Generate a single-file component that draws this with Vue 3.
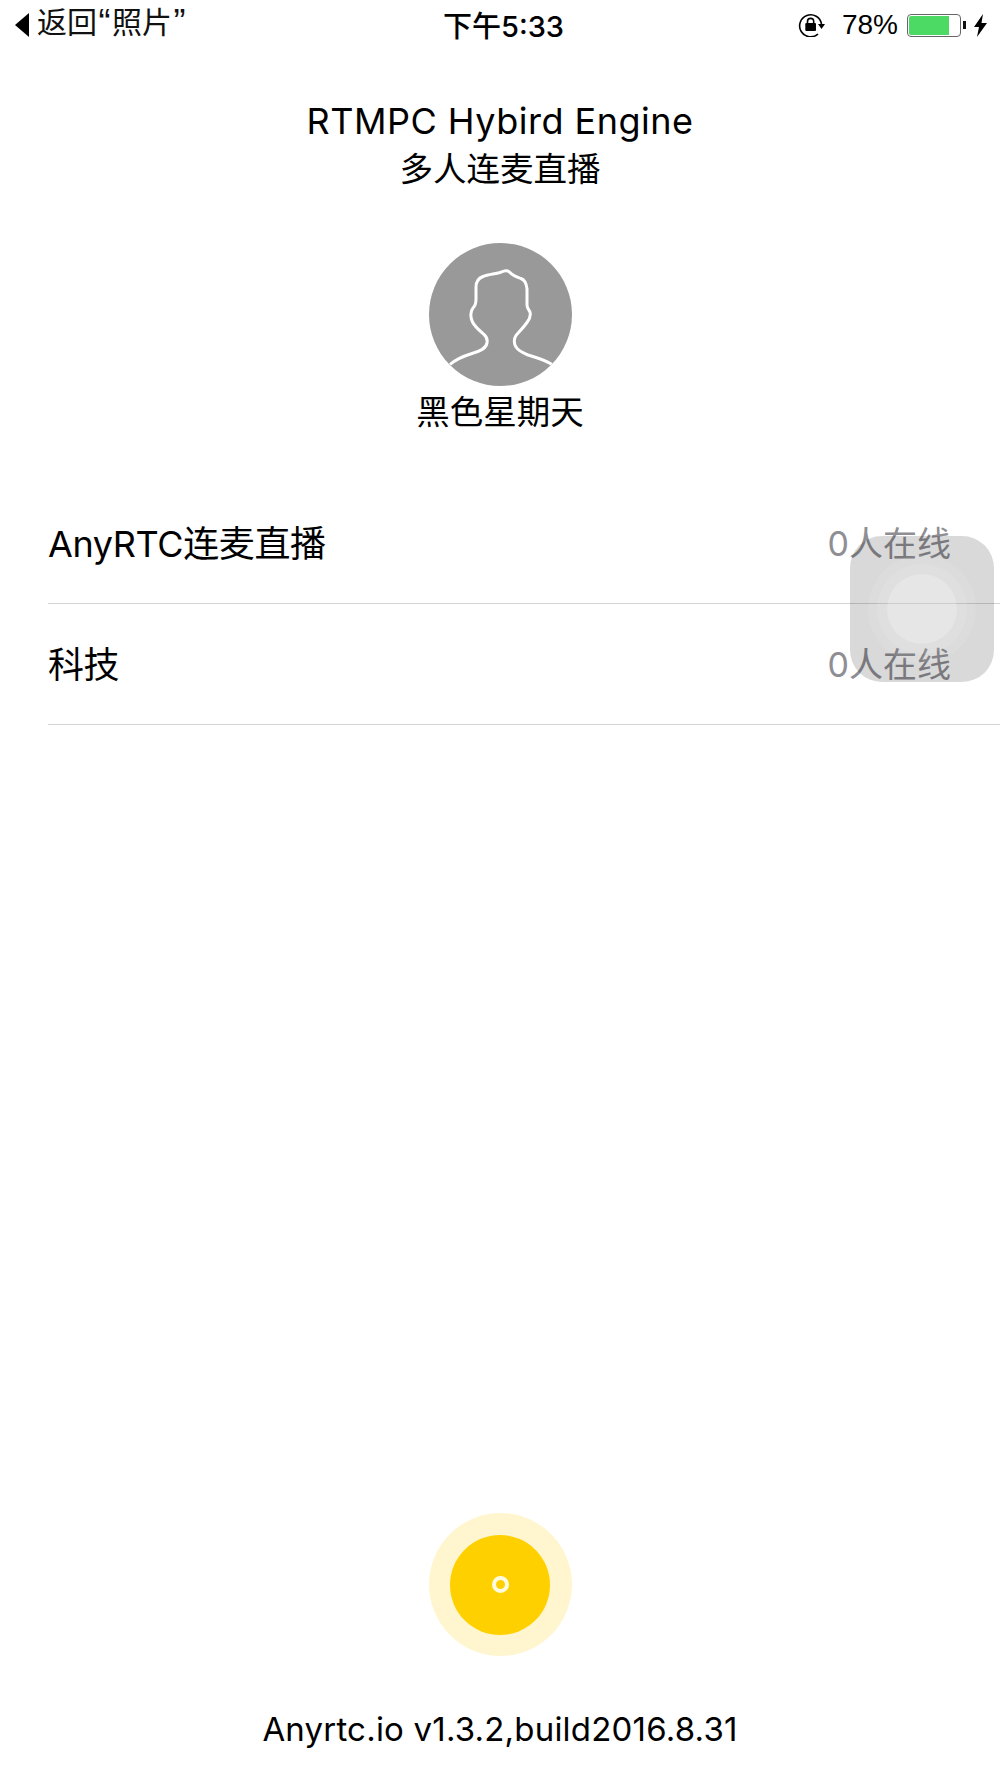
<template>
  <div class="page">
    <div class="status-bar">
      <div class="status-left">
        <svg class="back-arrow" width="14" height="24" viewBox="0 0 14 24"><path d="M14 0V24L0 12Z" fill="#000" /></svg>
        <span class="back-text">返回<span class="quote open">“</span>照片<span class="quote">”</span></span>
      </div>
      <div class="status-time">下午5:33</div>
      <div class="status-right">
        <svg class="lock-icon" width="28" height="24" viewBox="0 0 28 24" fill="none">
          <path d="M20 21A11 11 0 1 1 23.5 11" stroke="#000" stroke-width="1.6" />
          <path d="M20 11h7l-3.500 5z" fill="#000" />
          <rect x="7.300" y="10" width="10.700" height="8" rx="1" fill="#000" />
          <path d="M9.500 10V8.500a3.100 3.100 0 0 1 6.200 0V10" stroke="#000" stroke-width="1.600" />
        </svg>
        <span class="battery-pct">78%</span>
        <div class="battery"><div class="battery-fill"></div></div>
        <div class="battery-nub"></div>
        <svg class="bolt" width="13" height="23" viewBox="0 0 13 23"><path d="M9 0L0 13h5l-2 10 10-14H7.500z" fill="#000" /></svg>
      </div>
    </div>

    <div class="header">
      <div class="title">RTMPC Hybird Engine</div>
      <div class="subtitle">多人连麦直播</div>
    </div>

    <div class="profile">
      <svg class="avatar" width="143" height="143" viewBox="0 0 143 143">
        <defs><clipPath id="avatar-clip"><circle cx="71.500" cy="71.500" r="71.500" /></clipPath></defs>
        <circle cx="71.500" cy="71.500" r="71.500" fill="#999" />
        <path
          clip-path="url(#avatar-clip)"
          d="M21 121.500C27 116 35 113 43 110.500C50 108.500 57 106 58 100C58.500 97 58 94 55 91.500C50 87 46 84 43.500 79C41 74 41.500 68 44 65C46.500 62.500 47 60 47 56V44C47 38 50 35 54 33.500C59 31.500 66 31 71 29.500C75 28 78 26.500 81 29.500C84 33 88 34 92 35.500C96 37 97.500 41 98 46V62C98 65 100 67 101 69C102 73 100 77 98 79.500C94 85 90 89 87 92.500C84.500 96 85 101 87 104C89.500 108 94 110 99 112C107 114.500 116 117 123 121.500"
          fill="none"
          stroke="#fff"
          stroke-width="3"
        />
      </svg>
      <div class="nickname">黑色星期天</div>
    </div>

    <div class="room-list">
      <div v-for="room in rooms" :key="room.name" class="room-row">
        <span class="room-name">{{ room.name }}</span>
        <span class="room-count">{{ room.online }}人在线</span>
      </div>
    </div>

    <div class="spacer"></div>

    <div class="start-btn">
      <div class="start-inner"><div class="start-dot"></div></div>
    </div>

    <div class="footer">Anyrtc.io v1.3.2,build2016.8.31</div>

    <div class="assistive">
      <div class="ring ring-outer">
        <div class="ring ring-mid">
          <div class="ring ring-inner"></div>
        </div>
      </div>
    </div>
  </div>
</template>

<script setup>
const rooms = [
  { name: 'AnyRTC连麦直播', online: 0 },
  { name: '科技', online: 0 }
]
</script>

<style scoped>
.page {
  position: relative;
  width: 1000px;
  height: 1778px;
  overflow: hidden;
  display: flex;
  flex-direction: column;
  background: #fff;
  color: #000;
  font-family: Inter, "Noto Sans CJK SC", sans-serif;
}

.status-bar {
  height: 50px;
  display: grid;
  grid-template-columns: 1fr auto 1fr;
  align-items: center;
  padding: 0 13px 0 15px;
  box-sizing: border-box;
  font-size: 28px;
}

.status-left {
  display: flex;
  align-items: center;
  gap: 8px;
  color: #111;
}

.back-text {
  font-size: 30px;
  line-height: 40px;
  margin-top: -4px;
  font-family: "Liberation Sans", "Noto Sans CJK SC", sans-serif;
}

.quote {
  display: inline-block;
  width: 15px;
  font-size: 36px;
  line-height: 0;
  text-align: center;
  vertical-align: -2px;
}

.status-time {
  font-size: 29px;
  font-weight: 500;
  margin-left: 5px;
  margin-top: -2px;
}

.status-right {
  display: flex;
  align-items: center;
  justify-content: flex-end;
}

.lock-icon {
  margin-right: 1px;
}

.battery-pct {
  margin-left: 15px;
  margin-right: 9px;
  font-family: "Liberation Sans", sans-serif;
}

.battery {
  width: 54px;
  height: 23px;
  box-sizing: border-box;
  border: 1px solid #666;
  border-radius: 4px;
  padding: 1px;
}

.battery-fill {
  width: 40px;
  height: 100%;
  background: #4cd964;
  border-radius: 2px 0 0 2px;
}

.battery-nub {
  width: 3px;
  height: 8px;
  margin-left: 2px;
  background: #111;
}

.bolt {
  margin-left: 8px;
}

.header {
  margin-top: 46px;
  text-align: center;
}

.title {
  font-size: 36px;
  line-height: 50px;
  letter-spacing: 0.5px;
}

.subtitle {
  font-size: 33.500px;
  line-height: 46px;
}

.profile {
  margin-top: 51px;
  display: flex;
  flex-direction: column;
  align-items: center;
}

.avatar {
  display: block;
}

.nickname {
  font-size: 33.500px;
  line-height: 52px;
}

.room-list {
  margin-top: 45px;
  margin-left: 48px;
}

.room-row {
  height: 121px;
  box-sizing: border-box;
  border-bottom: 1px solid #d4d4d4;
  display: flex;
  align-items: center;
  justify-content: space-between;
  padding: 0 49px 4px 0;
}

.room-name {
  font-size: 36px;
  letter-spacing: -0.4px;
}

.room-count {
  font-size: 34px;
  color: #8e8e93;
}

.spacer {
  flex: 1;
}

.start-btn {
  align-self: center;
  width: 143px;
  height: 143px;
  border-radius: 50%;
  background: #fff6cf;
  display: flex;
  align-items: center;
  justify-content: center;
}

.start-inner {
  width: 100px;
  height: 100px;
  border-radius: 50%;
  background: #ffd000;
  display: flex;
  align-items: center;
  justify-content: center;
}

.start-dot {
  width: 17px;
  height: 17px;
  box-sizing: border-box;
  border: 4px solid #fffbe0;
  border-radius: 50%;
}

.footer {
  margin-top: 50px;
  margin-bottom: 26px;
  text-align: center;
  font-size: 33px;
  line-height: 46px;
  letter-spacing: 0.2px;
}

.assistive {
  position: absolute;
  left: 850px;
  top: 536px;
  width: 144px;
  height: 146px;
  border-radius: 32px;
  background: rgba(0, 0, 0, 0.15);
  display: flex;
  align-items: center;
  justify-content: center;
}

.ring {
  border-radius: 50%;
  display: flex;
  align-items: center;
  justify-content: center;
}

.ring-outer {
  width: 108px;
  height: 108px;
  background: rgba(255, 255, 255, 0.08);
}

.ring-mid {
  width: 90px;
  height: 90px;
  background: rgba(255, 255, 255, 0.1);
}

.ring-inner {
  width: 70px;
  height: 70px;
  background: rgba(255, 255, 255, 0.22);
}
</style>
